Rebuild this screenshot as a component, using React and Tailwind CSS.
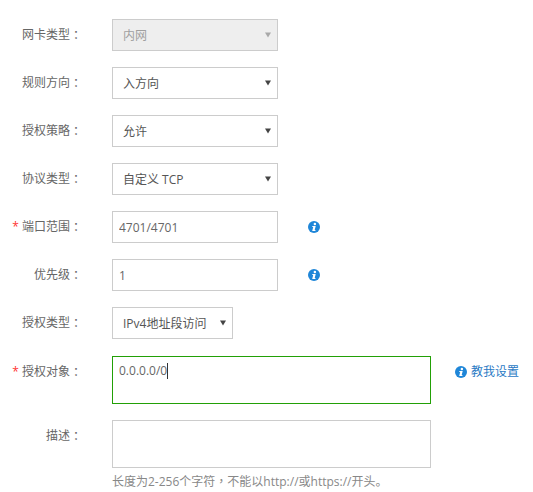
const Caret = ({ disabled }) => (
  <svg className="absolute top-[12px] right-[6px]" width="6" height="6" viewBox="0 0 6 6">
    <path d="M0 0.5H6L3 5.5Z" fill={disabled ? "#a8a8a8" : "#444444"} />
  </svg>
);

const Info = ({ className = "" }) => (
  <svg className={className} width="12" height="12" viewBox="0 0 12 12">
    <circle cx="6" cy="6" r="6" fill="#1f86d8" />
    <circle cx="6.9" cy="2.9" r="1.25" fill="#fff" />
    <path d="M4.4 4.9H7.7L6.7 8.9H7.6L7.3 10.1H4.2L5.2 6.1H4.2Z" fill="#fff" />
  </svg>
);

const Colon = () => <span className="font-['Noto_Sans_CJK_TC',sans-serif]">：</span>;

const Row = ({ label, req, children, className = "h-8 mb-4" }) => (
  <div className={`flex items-start ${className}`}>
    <div className="w-[82px] h-8 shrink-0 flex items-center justify-end text-[#666666] whitespace-nowrap">
      {req && <span className="text-[#ff3333] mr-[3px]">*</span>}
      {label}
      <Colon />
    </div>
    <div className="ml-[30px] flex items-start">{children}</div>
  </div>
);

const Select = ({ value, w = "w-[166px]", disabled }) => (
  <div
    className={`relative h-8 ${w} border border-[#cccccc] pl-[10px] flex items-center ${
      disabled ? "bg-[#eeeeee] text-[#a0a0a0]" : "bg-white text-[#555555]"
    }`}
  >
    <span className="relative top-px">{value}</span>
    <Caret disabled={disabled} />
  </div>
);

const Input = ({ value }) => (
  <input
    readOnly
    value={value}
    className="h-8 w-[166px] border border-[#cccccc] px-[6px] text-[#666666] bg-white outline-none"
  />
);

const Tip = ({ children }) => <div className="h-8 flex items-center">{children}</div>;

export default function App() {
  return (
    <div className="w-[533px] h-[492px] overflow-hidden bg-white pt-[19px] text-[12px] leading-[16px] font-['Open_Sans','Noto_Sans_CJK_SC',sans-serif]">
      <Row label="网卡类型"><Select value="内网" disabled /></Row>
      <Row label="规则方向"><Select value="入方向" /></Row>
      <Row label="授权策略"><Select value="允许" /></Row>
      <Row label="协议类型"><Select value="自定义 TCP" /></Row>
      <Row label="端口范围" req>
        <Input value="4701/4701" />
        <Tip><Info className="ml-[30px]" /></Tip>
      </Row>
      <Row label="优先级">
        <Input value="1" />
        <Tip><Info className="ml-[30px]" /></Tip>
      </Row>
      <Row label="授权类型" className="h-8 mb-[17px]"><Select value="IPv4地址段访问" w="w-[121px]" /></Row>
      <Row label="授权对象" req className="h-12 mb-4">
        <div className="w-[319px] h-12 border border-[#22a006] px-[6px] py-[6px] text-[#666666] flex items-start">
          <span>0.0.0.0/0</span>
          <span className="w-px h-[16px] bg-[#333333]" />
        </div>
        <div className="ml-6 flex items-center gap-1 h-8 text-[#2a7ac4] whitespace-nowrap">
          <Info />
          <span>教我设置</span>
        </div>
      </Row>
      <Row label="描述" className="h-12 mb-[5px]">
        <div className="w-[319px] h-12 border border-[#cccccc]" />
      </Row>
      <div className="ml-[112px] mt-[2px] text-[#888888] whitespace-nowrap">
        长度为2-256个字符<span className="font-['Noto_Sans_CJK_TC',sans-serif]">，</span>不能以http://或https://开头。
      </div>
    </div>
  );
}
